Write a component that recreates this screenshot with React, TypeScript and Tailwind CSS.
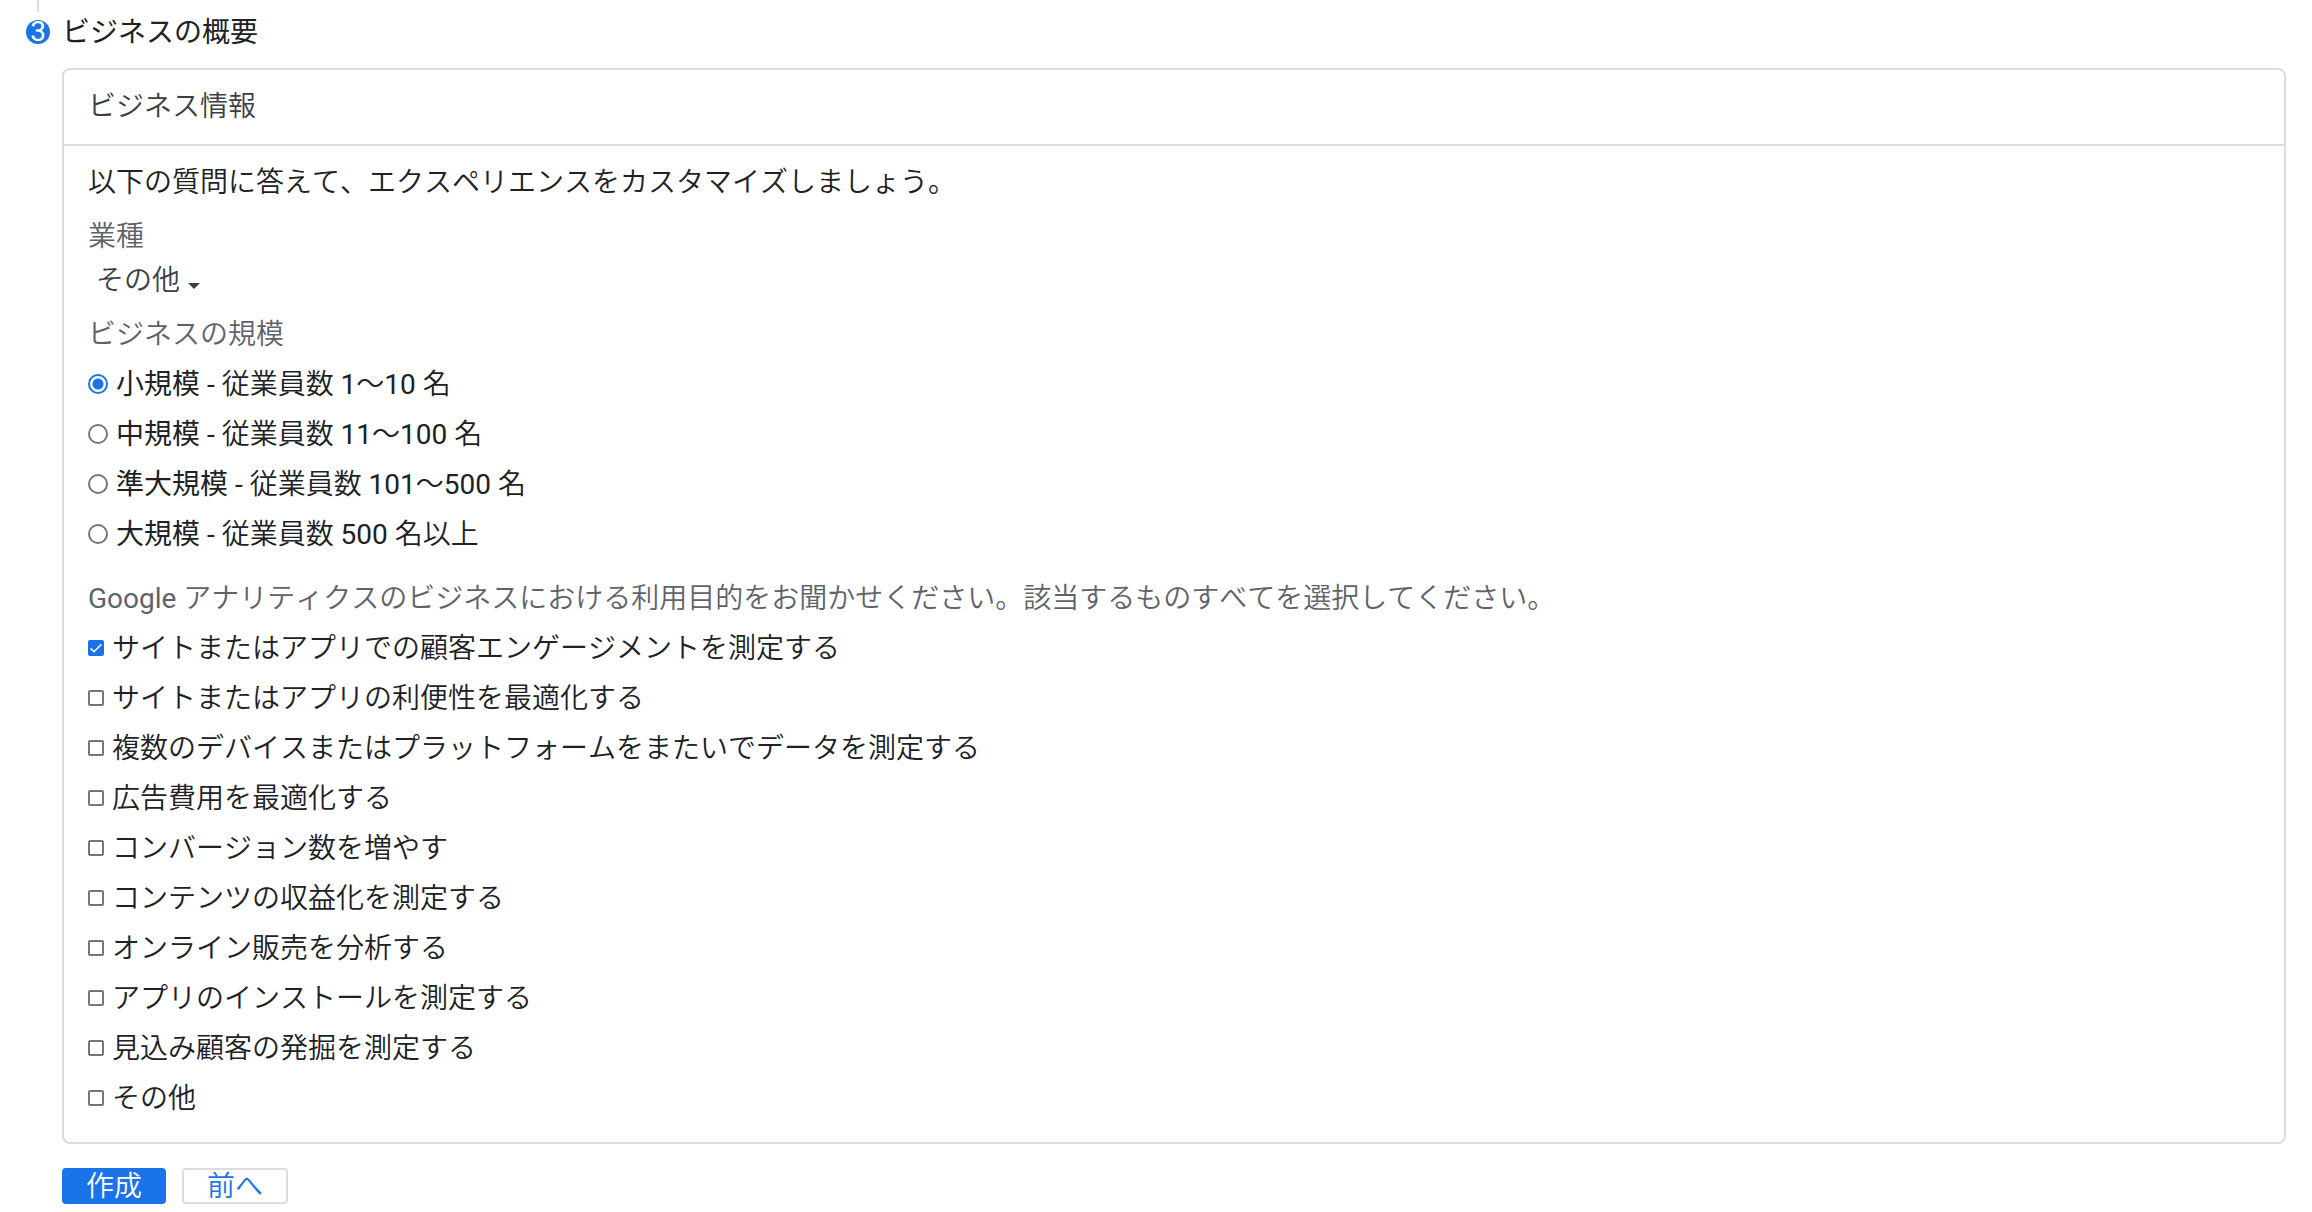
import { useState } from "react";

const sizes = [
  { id: "small", name: "小規模", detail: " - 従業員数 1〜10 名" },
  { id: "medium", name: "中規模", detail: " - 従業員数 11〜100 名" },
  { id: "large", name: "準大規模", detail: " - 従業員数 101〜500 名" },
  { id: "xlarge", name: "大規模", detail: " - 従業員数 500 名以上" },
];

const goals = [
  "サイトまたはアプリでの顧客エンゲージメントを測定する",
  "サイトまたはアプリの利便性を最適化する",
  "複数のデバイスまたはプラットフォームをまたいでデータを測定する",
  "広告費用を最適化する",
  "コンバージョン数を増やす",
  "コンテンツの収益化を測定する",
  "オンライン販売を分析する",
  "アプリのインストールを測定する",
  "見込み顧客の発掘を測定する",
  "その他",
];

function SizeOption({ id, name, detail, checked, onSelect }: {
  id: string;
  name: string;
  detail: string;
  checked: boolean;
  onSelect: () => void;
}) {
  return (
    <label className="flex h-[50px] items-center gap-2">
      <input
        type="radio"
        name="business-size"
        value={id}
        checked={checked}
        onChange={onSelect}
        className="h-5 w-5 shrink-0 appearance-none rounded-full border-2 border-[#767676] bg-white checked:border-[#1a73e8] checked:bg-[radial-gradient(circle,#1a73e8_5px,#fff_6px)]"
      />
      <span className="pt-[2px]">
        <span className="font-['Roboto','Noto_Sans_CJK_JP',sans-serif]">{name}</span>
        {detail}
      </span>
    </label>
  );
}

function GoalOption({ label, defaultChecked }: { label: string; defaultChecked: boolean }) {
  return (
    <label className="flex h-[50px] items-center gap-2">
      <span className="relative flex h-4 w-4 shrink-0">
        <input
          type="checkbox"
          defaultChecked={defaultChecked}
          className="peer h-4 w-4 appearance-none rounded-[2px] border-2 border-[#767676] bg-white checked:border-[#1a73e8] checked:bg-[#1a73e8]"
        />
        <svg
          viewBox="0 0 16 16"
          aria-hidden="true"
          className="pointer-events-none absolute inset-0 hidden h-4 w-4 peer-checked:block"
        >
          <path d="M2.6 8.4 6 11.8 13.4 4.4" fill="none" stroke="#fff" strokeWidth="1.5" />
        </svg>
      </span>
      <span className="pt-[2px]">{label}</span>
    </label>
  );
}

export default function App() {
  const [size, setSize] = useState("small");

  return (
    <main className="bg-white px-[26px] font-['Roboto','Noto_Sans_CJK_JP_DemiLight','Noto_Sans_CJK_JP',sans-serif] text-[28px] leading-10 text-[#202124] [font-kerning:none]">
      {/* ステップ見出し */}
      <header className="flex gap-3">
        <div className="flex w-6 flex-col items-center gap-2">
          <span className="h-3 w-[2px] bg-[#dadce0]" />
          <span className="flex h-6 w-6 items-center justify-center rounded-full bg-[#1a73e8] leading-6 text-white">
            3
          </span>
        </div>
        <h1 className="pt-[13px] font-['Roboto','Noto_Sans_CJK_JP',sans-serif]">ビジネスの概要</h1>
      </header>

      <form className="pl-9" onSubmit={(e) => e.preventDefault()}>
        <section className="mt-[15px] rounded-lg border-2 border-[#dadce0]">
          <h2 className="border-b-2 border-[#dadce0] px-6 py-[17px] text-[#3c4043]">ビジネス情報</h2>

          <div className="px-6 pt-[17px] pb-[19px]">
            <p>以下の質問に答えて、エクスペリエンスをカスタマイズしましょう。</p>

            <label htmlFor="industry" className="mt-[14px] block text-[#5f6368]">
              業種
            </label>
            <div className="relative mt-1 flex w-fit text-[#3c4043]">
              <select
                id="industry"
                className="h-10 appearance-none bg-transparent pr-6 pl-2 leading-10 [field-sizing:content]"
              >
                <option>その他</option>
              </select>
              <svg
                viewBox="0 0 12 6"
                aria-hidden="true"
                className="pointer-events-none absolute right-1 bottom-3 h-[6px] w-3"
              >
                <path d="M0 0h12L6 6z" fill="currentColor" />
              </svg>
            </div>

            <fieldset className="mt-[14px]">
              <legend className="mb-1 text-[#5f6368]">ビジネスの規模</legend>
              {sizes.map((s) => (
                <SizeOption key={s.id} {...s} checked={size === s.id} onSelect={() => setSize(s.id)} />
              ))}
            </fieldset>

            <fieldset className="mt-5">
              <legend className="mb-1 text-[#5f6368]">
                Google アナリティクスのビジネスにおける利用目的をお聞かせください。該当するものすべてを選択してください。
              </legend>
              {goals.map((goal, i) => (
                <GoalOption key={goal} label={goal} defaultChecked={i === 0} />
              ))}
            </fieldset>
          </div>
        </section>

        <div className="mt-6 flex gap-4">
          <button
            type="submit"
            className="h-9 rounded-[4px] border-2 border-[#1a73e8] bg-[#1a73e8] px-[22px] pt-[2px] leading-[30px] text-white"
          >
            作成
          </button>
          <button
            type="button"
            className="h-9 rounded-[4px] border-2 border-[#dadce0] bg-white px-[23px] pt-[2px] leading-[30px] text-[#1a73e8]"
          >
            前へ
          </button>
        </div>
      </form>
    </main>
  );
}
